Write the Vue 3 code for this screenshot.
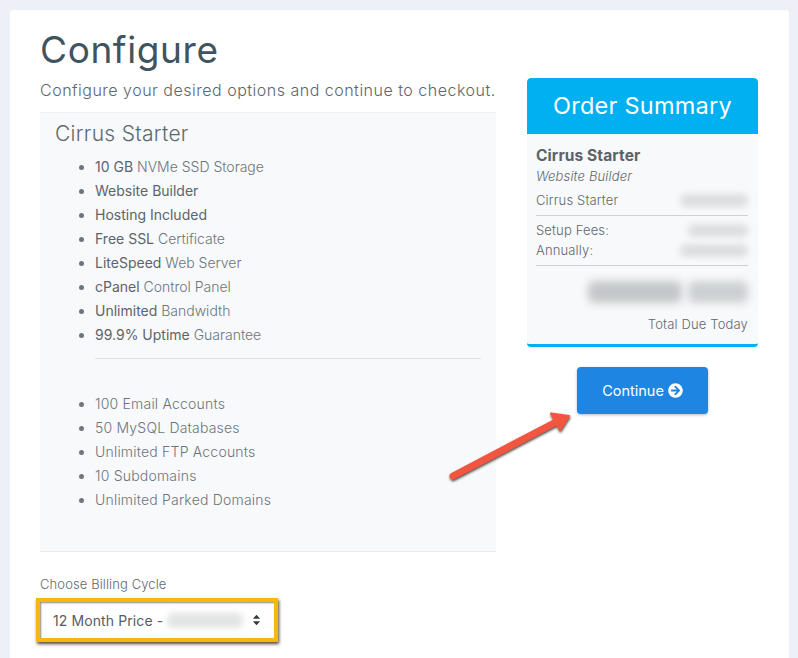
<script setup>
const mainFeatures = [
  ['10 GB', ' NVMe SSD Storage'],
  ['Website Builder', ''],
  ['Hosting Included', ''],
  ['Free SSL', ' Certificate'],
  ['LiteSpeed', ' Web Server'],
  ['cPanel', ' Control Panel'],
  ['Unlimited', ' Bandwidth'],
  ['99.9% Uptime', ' Guarantee'],
]
const extraFeatures = [
  '100 Email Accounts',
  '50 MySQL Databases',
  'Unlimited FTP Accounts',
  '10 Subdomains',
  'Unlimited Parked Domains',
]
</script>

<template>
  <div class="page">
    <main class="card">
      <section class="left">
        <h1 class="title">Configure</h1>
        <p class="subtitle">Configure your desired options and continue to checkout.</p>
        <div class="product">
          <h2 class="product-name">Cirrus Starter</h2>
          <ul class="features">
            <li v-for="f in mainFeatures" :key="f[0]"><span class="strong">{{ f[0] }}</span>{{ f[1] }}</li>
          </ul>
          <hr class="divider" />
          <ul class="features extra">
            <li v-for="f in extraFeatures" :key="f">{{ f }}</li>
          </ul>
        </div>
        <label class="cycle-label">Choose Billing Cycle</label>
        <div class="select">
          <span class="select-text">12 Month Price -</span>
          <span class="blur blur-select"></span>
          <svg class="carets" viewBox="0 0 10 14" width="9" height="12" aria-hidden="true">
            <path d="M5 0.8 9.2 5.4H0.8Z M5 13.2 0.8 8.6H9.2Z" fill="#343a40" />
          </svg>
        </div>
      </section>

      <aside class="right">
        <div class="summary">
          <div class="summary-head">Order Summary</div>
          <div class="summary-body">
            <div class="s-name">Cirrus Starter</div>
            <div class="s-sub">Website Builder</div>
            <div class="s-row first"><span>Cirrus Starter</span><span class="blur b70"></span></div>
            <div class="s-rule"></div>
            <div class="s-row"><span>Setup Fees:</span><span class="blur b62"></span></div>
            <div class="s-row"><span>Annually:</span><span class="blur b70"></span></div>
            <div class="s-rule"></div>
            <div class="s-total">
              <span class="blur total-a"></span>
              <span class="blur total-b"></span>
            </div>
            <div class="s-due">Total Due Today</div>
          </div>
        </div>
        <button class="continue" type="button">
          Continue
          <svg viewBox="0 0 512 512" width="15" height="15" aria-hidden="true">
            <path fill="#fff" d="M256 8c137 0 248 111 248 248S393 504 256 504 8 393 8 256 119 8 256 8zm-28.9 143.6l75.5 72.4H120c-13.3 0-24 10.7-24 24v16c0 13.3 10.7 24 24 24h182.6l-75.5 72.4c-9.7 9.3-9.9 24.8-.4 34.3l11 10.9c9.4 9.4 24.6 9.4 33.9 0L404.3 273c9.4-9.4 9.4-24.6 0-33.9L271.6 106.3c-9.4-9.4-24.6-9.4-33.9 0l-11 10.9c-9.5 9.6-9.3 25.1.4 34.4z" />
          </svg>
        </button>
      </aside>

      <svg class="arrow" viewBox="0 0 135 90" width="135" height="90" aria-hidden="true">
        <defs>
          <filter id="arrow-shadow" x="-20%" y="-20%" width="140%" height="140%">
            <feDropShadow dx="0.5" dy="1.5" stdDeviation="1.2" flood-color="#2a1a14" flood-opacity="0.85" />
          </filter>
        </defs>
        <g filter="url(#arrow-shadow)">
          <path d="M11 76 L114 22" stroke="#f2553f" stroke-width="7" stroke-linecap="round" fill="none" />
          <path d="M109 13.5 L127 16 L118 30 Z" fill="#f2553f" stroke="#f2553f" stroke-width="2" stroke-linejoin="round" />
        </g>
      </svg>
    </main>
  </div>
</template>

<style scoped>
.page {
  height: 658px;
  overflow: hidden;
  box-sizing: border-box;
  padding: 10px 9px 0 10px;
  background: #edf1f7;
  font-family: "Inter", "Open Sans", sans-serif;
  color: #6c757d;
}
.card {
  position: relative;
  display: grid;
  grid-template-columns: 456px 231px;
  column-gap: 31px;
  align-items: start;
  height: 660px;
  box-sizing: border-box;
  padding: 19px 30px 0;
  background: #fff;
  border-radius: 4px 4px 0 0;
}
.title {
  margin: 0;
  font-size: 37px;
  line-height: 42px;
  font-weight: 400;
  color: #3f545f;
  letter-spacing: 0.6px;
}
.subtitle {
  margin: 8px 0 0;
  font-size: 16px;
  line-height: 22px;
  font-weight: 300;
  color: #5d666d;
  letter-spacing: 0.5px;
  white-space: nowrap;
}
.product {
  box-sizing: border-box;
  height: 440px;
  margin-top: 11px;
  padding: 8px 15px 0;
  background: #f8f9fa;
  border-top: 1px solid #f0f1f2;
  border-bottom: 1px solid #e9ecef;
}
.product-name {
  margin: 0;
  font-size: 21px;
  line-height: 26px;
  font-weight: 300;
  color: #5f686f;
  letter-spacing: 0.3px;
}
.features {
  margin: 8px 0 0;
  padding: 0 0 0 40px;
  font-size: 14px;
  line-height: 24px;
  font-weight: 300;
  color: #6c757d;
  letter-spacing: 0;
}
.strong {
  font-weight: 400;
  color: #5c646b;
}
.divider {
  margin: 11px 0 0 40px;
  width: 386px;
  border: 0;
  border-top: 1px solid #dfe1e3;
}
.extra {
  margin-top: 33px;
  letter-spacing: 0.2px;
}
.cycle-label {
  display: block;
  margin-top: 23px;
  font-size: 13px;
  line-height: 18px;
  font-weight: 300;
  color: #5f686f;
  letter-spacing: 0.1px;
}
.select {
  display: flex;
  align-items: center;
  box-sizing: border-box;
  width: 242px;
  height: 44px;
  margin: 5px 0 0 -4px;
  padding: 0 13px 0 13px;
  background: #fff;
  border: 4px solid #f5b90d;
  box-shadow: 1px 2px 3px rgba(50, 40, 10, 0.85), inset 1px 1px 2px rgba(50, 40, 10, 0.55);
  font-size: 14px;
  font-weight: 400;
  color: #555d64;
  letter-spacing: 0.1px;
}
.select-text {
  white-space: nowrap;
}
.blur {
  display: block;
  height: 13px;
  border-radius: 6px;
  background: #dcdedf;
  filter: blur(3px);
}
.blur-select {
  width: 76px;
  height: 15px;
  margin-left: 4px;
  background: #e3e4e4;
}
.carets {
  margin-left: auto;
}
.right {
  display: flex;
  flex-direction: column;
  align-items: center;
  padding-top: 49px;
}
.summary {
  width: 100%;
  box-sizing: border-box;
  height: 269px;
  background: #f8f9fa;
  border-bottom: 3px solid #00b0f0;
  border-radius: 4px;
  overflow: hidden;
}
.summary-head {
  height: 56px;
  line-height: 56px;
  text-align: center;
  background: #00b0f0;
  color: #fff;
  font-size: 23.5px;
  font-weight: 400;
  letter-spacing: 0.25px;
  border-radius: 4px 4px 0 0;
}
.summary-body {
  padding: 12px 10px 0 9px;
  font-size: 13px;
  font-weight: 300;
  color: #5f686f;
  letter-spacing: 0.15px;
}
.s-name {
  font-size: 15.5px;
  line-height: 19px;
  font-weight: 700;
  color: #5b636a;
  letter-spacing: 0.1px;
}
.s-sub {
  margin-top: 2px;
  font-size: 13px;
  line-height: 18px;
  font-style: italic;
}
.s-row {
  display: flex;
  align-items: center;
  justify-content: space-between;
  height: 20px;
}
.s-row.first {
  margin-top: 5px;
}
.s-rule {
  margin: 5px 0 4px;
  border-top: 1px solid #cfd2d4;
}
.b70 {
  width: 68px;
}
.b62 {
  width: 60px;
}
.s-total {
  display: flex;
  justify-content: flex-end;
  gap: 6px;
  margin-top: 15px;
}
.total-a {
  width: 94px;
  height: 22px;
  background: #c4c7c9;
  filter: blur(4px);
}
.total-b {
  width: 60px;
  height: 22px;
  background: #cdd0d2;
  filter: blur(4px);
}
.s-due {
  margin-top: 12px;
  text-align: right;
  line-height: 18px;
}
.continue {
  display: flex;
  align-items: center;
  justify-content: center;
  gap: 4px;
  width: 131px;
  height: 47px;
  margin-top: 20px;
  padding: 0;
  border: 0;
  border-radius: 4px;
  background: #1f85e3;
  color: #fff;
  font-family: inherit;
  font-size: 14.5px;
  font-weight: 400;
  box-shadow: 0 1px 3px rgba(30, 90, 160, 0.4);
}
.arrow {
  position: absolute;
  left: 432px;
  top: 390px;
}
</style>

<style>
html, body {
  margin: 0;
  background: #edf1f7;
}
</style>
